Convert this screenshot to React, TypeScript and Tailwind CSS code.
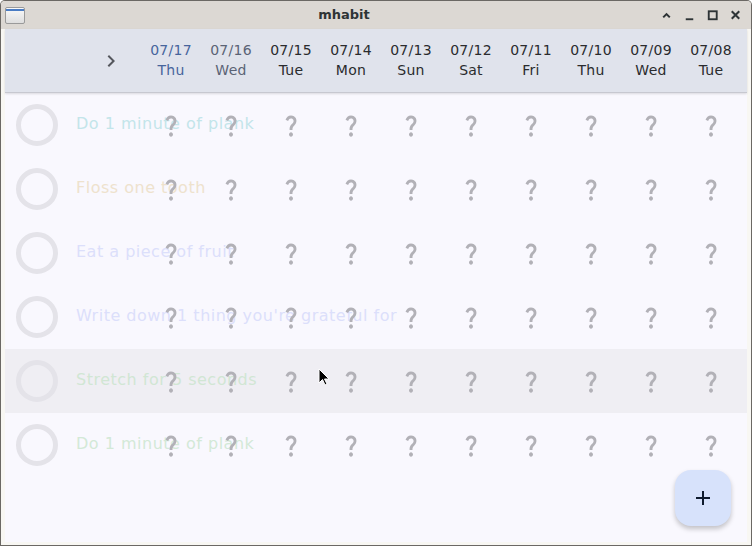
import React from "react";

const days = [
  { d: "07/17", w: "Thu", c: "text-[#47659c]" },
  { d: "07/16", w: "Wed", c: "text-[#5b6376]" },
  { d: "07/15", w: "Tue", c: "text-[#2a2b2e]" },
  { d: "07/14", w: "Mon", c: "text-[#2a2b2e]" },
  { d: "07/13", w: "Sun", c: "text-[#2a2b2e]" },
  { d: "07/12", w: "Sat", c: "text-[#2a2b2e]" },
  { d: "07/11", w: "Fri", c: "text-[#2a2b2e]" },
  { d: "07/10", w: "Thu", c: "text-[#2a2b2e]" },
  { d: "07/09", w: "Wed", c: "text-[#2a2b2e]" },
  { d: "07/08", w: "Tue", c: "text-[#2a2b2e]" },
];

const habits = [
  { t: "Do 1 minute of plank", c: "text-[#c3e5ea]", hl: false },
  { t: "Floss one tooth", c: "text-[#eee2cd]", hl: false },
  { t: "Eat a piece of fruit", c: "text-[#dcdffb]", hl: false },
  { t: "Write down 1 thing you're grateful for", c: "text-[#dcdffb]", hl: false },
  { t: "Stretch for 5 seconds", c: "text-[#d1e6d4]", hl: true },
  { t: "Do 1 minute of plank", c: "text-[#d3e9d7]", hl: false },
];

function Question() {
  return (
    <svg width="24" height="27" viewBox="0 0 24 24" preserveAspectRatio="none" fill="#b2b1b7">
      <path d="M11.07 12.85c.77-1.39 2.25-2.21 3.11-3.440.91-1.29.4-3.7-2.18-3.7-1.69 0-2.52 1.28-2.87 2.34L6.54 6.96C7.25 4.83 9.18 3 11.99 3c2.35 0 3.96 1.07 4.78 2.41.7 1.15 1.11 3.3.03 4.9-1.2 1.77-2.35 2.31-2.97 3.45-.25.46-.35.76-.35 2.24h-2.89c-.01-.78-.13-2.05.48-3.15zM14 20c0 1.1-.9 2-2 2s-2-.9-2-2 .9-2 2-2 2 .9 2 2z" />
    </svg>
  );
}

export default function App() {
  const font = { fontFamily: '"DejaVu Sans", "Noto Sans", sans-serif' };
  return (
    <div className="w-[752px] h-[546px] bg-[#6b6864] p-px rounded-t-[5px]" style={font}>
      <div className="w-full h-full flex flex-col bg-[#f8f7f3] rounded-t-[4px] overflow-hidden">
        {/* Title bar */}
        <div className="h-[28px] bg-[#dcd8d3] flex items-center shrink-0">
          <div className="w-[20px] h-[17px] ml-[4px] rounded-[2px] border border-[#9a9a9a] bg-gradient-to-b from-[#fafafa] to-[#dedede] flex flex-col overflow-hidden">
            <div className="h-[2px] bg-[#4a7cc4] mt-[1px]" />
          </div>
          <div className="flex-1 text-center text-[13px] font-bold text-[#2e3436] pl-[4px]">mhabit</div>
          <div className="flex items-center gap-[8px] pr-[8px]">
            <svg width="15" height="15" viewBox="0 0 16 16"><path d="M4.5 10 8 6.5 11.5 10" fill="none" stroke="#2e3436" strokeWidth="2.2" /></svg>
            <svg width="15" height="15" viewBox="0 0 16 16"><rect x="4" y="11" width="8" height="2" fill="#2e3436" /></svg>
            <svg width="15" height="15" viewBox="0 0 16 16"><rect x="4" y="3.5" width="8.5" height="8.5" fill="none" stroke="#2e3436" strokeWidth="2" /></svg>
            <svg width="15" height="15" viewBox="0 0 16 16"><path d="M4 3.5 12 11.5M12 3.5 4 11.5" stroke="#2e3436" strokeWidth="2.2" /></svg>
          </div>
        </div>
        {/* App area */}
        <div className="flex-1 px-[4px] pb-[3px] flex flex-col min-h-0">
          <div className="flex-1 bg-[#f9f8fe] flex flex-col relative">
            {/* header */}
            <div className="h-[64px] bg-[#e0e3ec] flex items-stretch shrink-0 border-b border-[#c7c8d0] shadow-[0_1px_2px_rgba(0,0,0,0.12)]">
              <div className="w-[136px] flex items-center justify-end pr-[18px]">
                <svg width="24" height="24" viewBox="0 0 24 24" fill="#55575d">
                  <path d="M10 6 8.59 7.41 13.17 12l-4.58 4.59L10 18l6-6z" />
                </svg>
              </div>
              <div className="grid grid-cols-10 w-[600px]">
                {days.map((x, i) => (
                  <div key={i} className={`flex flex-col items-center justify-center text-[14px] leading-[20px] tracking-[0.25px] pb-[1px] ${x.c}`}>
                    <div>{x.d}</div>
                    <div>{x.w}</div>
                  </div>
                ))}
              </div>
            </div>
            {/* rows */}
            <div className="flex flex-col">
              {habits.map((h, i) => (
                <div key={i} className={`grid h-[64px] ${h.hl ? "bg-[#efeef3]" : ""}`}>
                  <div className="col-start-1 row-start-1 flex items-center">
                    <div className="w-[64px] flex items-center justify-center">
                      <div className="w-[42px] h-[42px] rounded-full border-[5px] border-[#e4e3e9]" />
                    </div>
                    <div className={`ml-[7px] text-[16px] tracking-[0.5px] pb-[2px] ${h.c}`}>{h.t}</div>
                  </div>
                  <div className="col-start-1 row-start-1 flex items-center pl-[136px]">
                    <div className="grid grid-cols-10 w-[600px]">
                      {days.map((_, j) => (
                        <div key={j} className="flex items-center justify-center pt-[1px]">
                          <Question />
                        </div>
                      ))}
                    </div>
                  </div>
                </div>
              ))}
            </div>
            {/* FAB */}
            <div className="absolute right-[16px] bottom-[16px] w-[56px] h-[56px] rounded-[16px] bg-[#d7e2fb] shadow-[0_3px_5px_rgba(0,0,0,0.22)] flex items-center justify-center">
              <svg width="24" height="24" viewBox="0 0 24 24" fill="#0f1b2e">
                <path d="M19 13h-6v6h-2v-6H5v-2h6V5h2v6h6v2z" />
              </svg>
            </div>
            {/* cursor */}
            <svg className="absolute left-[313px] top-[339px]" width="12" height="18" viewBox="0 0 12 18">
              <path d="M1 1v14l3.5-3.5 2.5 5.5 2-1-2.5-5H11z" fill="#000" stroke="#fff" strokeWidth="1" />
            </svg>
          </div>
        </div>
      </div>
    </div>
  );
}
